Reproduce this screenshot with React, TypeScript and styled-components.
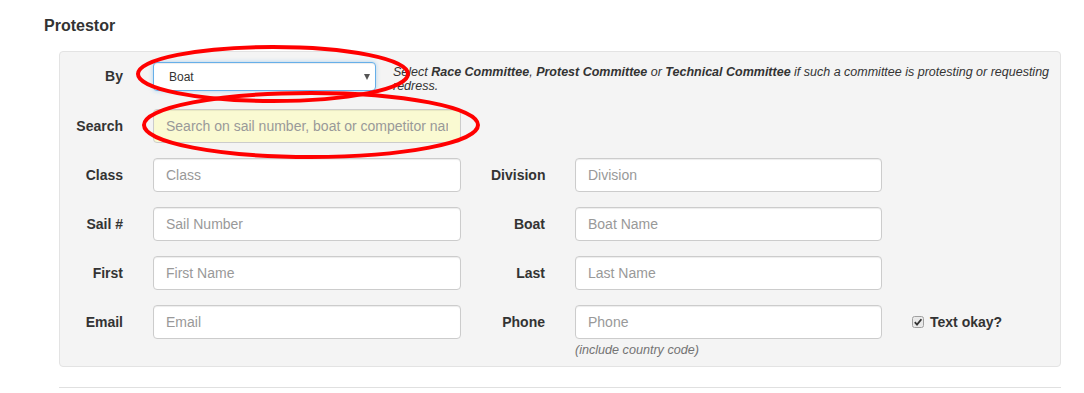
import * as React from "react";
import styled, { createGlobalStyle } from "styled-components";

const GlobalStyle = createGlobalStyle`
  html, body {
    margin: 0;
    padding: 0;
    background: #fff;
    overflow: hidden;
  }
  body {
    font-family: "Liberation Sans", Arial, sans-serif;
    color: #333;
  }
`;

const Page = styled.div`
  position: relative;
  width: 1084px;
  height: 393px;
  padding: 16px 0 0 44px;
  box-sizing: border-box;
`;

const Heading = styled.h4`
  margin: 0 0 15px;
  font-size: 16px;
  line-height: 20px;
  font-weight: bold;
  color: #333;
`;

const Well = styled.div`
  margin-left: 15px;
  width: 1002px;
  box-sizing: border-box;
  background: #f4f4f4;
  border: 1px solid #e3e3e3;
  border-radius: 4px;
  padding: 10px 8px 7px 9px;
`;

const ByRow = styled.div`
  display: flex;
  align-items: flex-start;
  height: 29px;
  margin-bottom: 18px;
`;

const SearchRow = styled.div`
  display: flex;
  align-items: center;
  margin-bottom: 15px;
`;

const Label = styled.label<{ $lh?: number }>`
  width: 54px;
  flex: none;
  text-align: right;
  font-size: 14px;
  font-weight: bold;
  line-height: ${(p) => p.$lh ?? 34}px;
  color: #333;
  white-space: nowrap;
`;

const SelectWrap = styled.div`
  position: relative;
  margin-left: 30px;
  width: 223px;
  height: 29px;
  flex: none;
`;

const Select = styled.select`
  appearance: none;
  width: 100%;
  height: 100%;
  box-sizing: border-box;
  border: 1px solid #66afe9;
  border-radius: 4px;
  box-shadow: inset 0 1px 1px rgba(0, 0, 0, 0.075), 0 0 4px rgba(102, 175, 233, 0.5);
  background: #fff;
  padding: 0 0 0 15px;
  font-family: "Liberation Sans", Arial, sans-serif;
  font-size: 12px;
  color: #333;
  outline: none;
`;

const Caret = styled.span`
  position: absolute;
  right: 6px;
  top: 12px;
  width: 0;
  height: 0;
  border-left: 3.5px solid transparent;
  border-right: 3.5px solid transparent;
  border-top: 6px solid #555;
  pointer-events: none;
`;

const HelpBy = styled.div`
  margin-left: 17px;
  margin-top: 3px;
  flex: 1;
  font-size: 12.5px;
  line-height: 14px;
  font-style: italic;
  color: #333;
`;

const Input = styled.input<{ $tint?: boolean; $w?: number }>`
  width: ${(p) => p.$w ?? 308}px;
  height: 34px;
  box-sizing: border-box;
  border: 1px solid #ccc;
  border-radius: 4px;
  box-shadow: inset 0 1px 1px rgba(0, 0, 0, 0.075);
  background: ${(p) => (p.$tint ? "#fafad2" : "#fff")};
  padding: 0 12px;
  font-family: "Liberation Sans", Arial, sans-serif;
  font-size: 14px;
  color: #555;
  outline: none;
  &::placeholder {
    color: #999;
  }
`;

const SearchInput = styled(Input)`
  margin-left: 30px;
`;

const FieldGrid = styled.div`
  display: grid;
  grid-template-columns: 54px 308px 54px 307px auto;
  column-gap: 30px;
  row-gap: 15px;
  align-items: start;
`;

const Stack = styled.div`
  display: flex;
  flex-direction: column;
`;

const HelpBlock = styled.span`
  margin-top: 3px;
  font-size: 12.6px;
  line-height: 17px;
  font-style: italic;
  color: #737373;
`;

const CheckLabel = styled.label`
  display: flex;
  align-items: center;
  gap: 6px;
  height: 34px;
  font-size: 14px;
  font-weight: bold;
  color: #333;
`;

const Rule = styled.hr`
  margin: 20px 0 0 15px;
  width: 1002px;
  border: 0;
  border-top: 1px solid #e0e0e0;
`;

const Overlay = styled.svg`
  position: absolute;
  left: 0;
  top: 0;
  pointer-events: none;
`;

const CheckBox = () => (
  <svg width="12" height="12" viewBox="0 0 12 12">
    <rect x="0.5" y="0.5" width="11" height="11" rx="2" fill="#e9e9e9" stroke="#a0a0a0" />
    <path d="M2.8 6.2 L5 8.6 L9.4 3.2" fill="none" stroke="#333" strokeWidth="1.8" />
  </svg>
);

type Field = { label: string; placeholder: string };

const rows: [Field, Field][] = [
  [
    { label: "Class", placeholder: "Class" },
    { label: "Division", placeholder: "Division" },
  ],
  [
    { label: "Sail #", placeholder: "Sail Number" },
    { label: "Boat", placeholder: "Boat Name" },
  ],
  [
    { label: "First", placeholder: "First Name" },
    { label: "Last", placeholder: "Last Name" },
  ],
];

export default function App() {
  return (
    <>
      <GlobalStyle />
      <Page>
        <Heading>Protestor</Heading>
        <Well>
          <ByRow>
            <Label $lh={29}>By</Label>
            <SelectWrap>
              <Select defaultValue="Boat">
                <option>Boat</option>
                <option>Race Committee</option>
                <option>Protest Committee</option>
                <option>Technical Committee</option>
              </Select>
              <Caret />
            </SelectWrap>
            <HelpBy>
              Select <b>Race Committee</b>, <b>Protest Committee</b> or <b>Technical Committee</b> if
              such a committee is protesting or requesting redress.
            </HelpBy>
          </ByRow>
          <SearchRow>
            <Label>Search</Label>
            <SearchInput $tint placeholder="Search on sail number, boat or competitor name" />
          </SearchRow>
          <FieldGrid>
            {rows.map(([a, b]) => (
              <React.Fragment key={a.label}>
                <Label>{a.label}</Label>
                <Input placeholder={a.placeholder} />
                <Label>{b.label}</Label>
                <Input $w={307} placeholder={b.placeholder} />
                <span />
              </React.Fragment>
            ))}
            <Label>Email</Label>
            <Input placeholder="Email" />
            <Label>Phone</Label>
            <Stack>
              <Input $w={307} placeholder="Phone" />
              <HelpBlock>(include country code)</HelpBlock>
            </Stack>
            <CheckLabel>
              <CheckBox />
              Text okay?
            </CheckLabel>
          </FieldGrid>
        </Well>
        <Rule />
        <Overlay width="1084" height="393">
          <ellipse cx="273" cy="74" rx="135" ry="27" fill="none" stroke="#f00" strokeWidth="4" />
          <ellipse cx="311" cy="125" rx="167" ry="32" fill="none" stroke="#f00" strokeWidth="4" />
        </Overlay>
      </Page>
    </>
  );
}
